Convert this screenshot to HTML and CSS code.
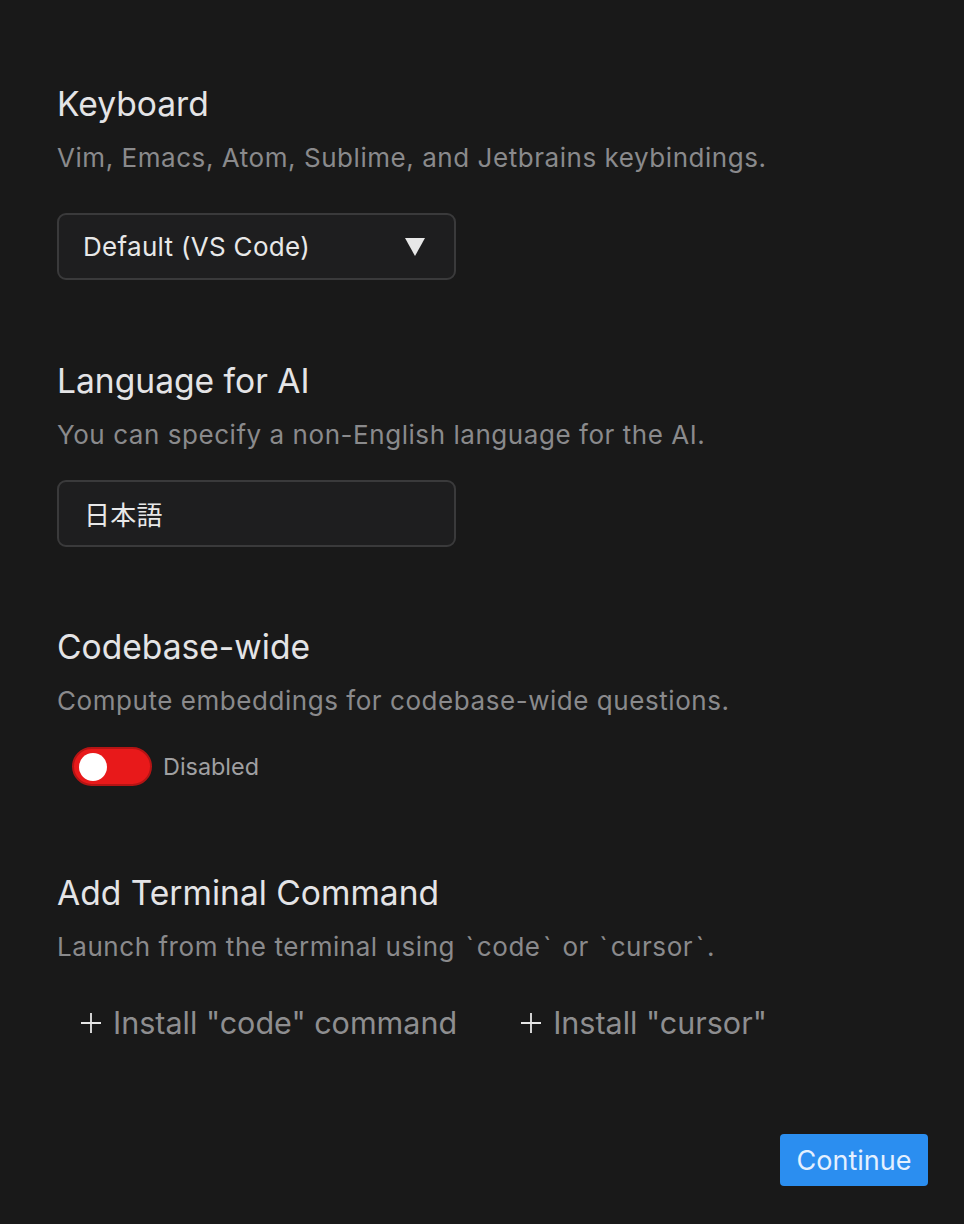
FILE: index.html
```html
<!DOCTYPE html>
<html lang="en">
<head>
<meta charset="utf-8">
<link rel="stylesheet" href="styles.css">
</head>
<body>
<main class="page">
  <section class="section s-keyboard">
    <h2 class="title">Keyboard</h2>
    <p class="desc">Vim, Emacs, Atom, Sublime, and Jetbrains keybindings.</p>
    <div class="select">
      <span class="select-text">Default (VS Code)</span>
      <svg class="caret" width="22" height="20" viewBox="0 0 22 20"><path d="M1 1 H21 L11 19 Z" fill="#e8e8e8"/></svg>
    </div>
  </section>

  <section class="section s-language">
    <h2 class="title">Language for AI</h2>
    <p class="desc">You can specify a non-English language for the AI.</p>
    <div class="input"><span class="input-text">日本語</span></div>
  </section>

  <section class="section s-codebase">
    <h2 class="title">Codebase-wide</h2>
    <p class="desc">Compute embeddings for codebase-wide questions.</p>
    <div class="toggle-row">
      <span class="toggle"><span class="knob"></span></span>
      <span class="toggle-label">Disabled</span>
    </div>
  </section>

  <section class="section s-terminal">
    <h2 class="title">Add Terminal Command</h2>
    <p class="desc">Launch from the terminal using <span class="tick">`</span>code<span class="tick">`</span> or <span class="tick">`</span>cursor<span class="tick">`</span>.</p>
    <div class="installs">
      <span class="install"><svg class="plus" width="22" height="22" viewBox="0 0 22 22"><path d="M11 1 V21 M1 11 H21" stroke="#e6e6e6" stroke-width="1.8"/></svg>Install "code" command</span>
      <span class="install"><svg class="plus" width="22" height="22" viewBox="0 0 22 22"><path d="M11 1 V21 M1 11 H21" stroke="#e6e6e6" stroke-width="1.8"/></svg>Install "cursor"</span>
    </div>
  </section>

  <div class="footer">
    <button class="continue">Continue</button>
  </div>
</main>
</body>
</html>
```

FILE: styles.css
```css
html, body {
  margin: 0;
  padding: 0;
  background: #191919;
  height: 100%;
}
body {
  font-family: Inter, "Noto Sans CJK JP", sans-serif;
  color: #e4e4e6;
}
.page {
  padding: 84px 36px 0 57px;
  display: flex;
  flex-direction: column;
}
.section { display: flex; flex-direction: column; align-items: flex-start; }
.title {
  margin: 0;
  font-size: 33.6px;
  line-height: 40px;
  font-weight: 400;
  color: #e4e4e6;
}
.desc {
  margin: 18px 0 0;
  font-size: 26px;
  line-height: 32px;
  letter-spacing: 0.55px;
  color: #8a8a8c;
}
.tick { padding: 0 2.5px; }
.select, .input {
  box-sizing: border-box;
  width: 399px;
  height: 67px;
  border: 2px solid #3a3a3b;
  border-radius: 9px;
  background: #1e1e1f;
  display: flex;
  align-items: center;
  padding: 0 26px 0 24px;
}
.select { margin-top: 39px; justify-content: space-between; }
.input { margin-top: 29px; padding-left: 25px; }
.select-text, .input-text {
  font-size: 26px;
  letter-spacing: 0.3px;
  color: #e8e8e8;
}
.caret { margin-right: 2px; }
.s-language { margin-top: 81px; }
.s-codebase { margin-top: 80px; }
.s-terminal { margin-top: 87px; }
.toggle-row {
  margin: 30px 0 0 15px;
  display: flex;
  align-items: center;
  gap: 11px;
}
.toggle {
  box-sizing: border-box;
  width: 80px;
  height: 39px;
  border-radius: 20px;
  background: #e8191a;
  border: 2px solid #b51414;
  display: flex;
  align-items: center;
  padding-left: 5px;
}
.knob {
  width: 28px;
  height: 28px;
  border-radius: 50%;
  background: #ffffff;
}
.toggle-label {
  font-size: 23.4px;
  color: #a0a0a2;
}
.installs {
  margin: 40px 0 0 23px;
  display: flex;
  gap: 63px;
}
.install {
  display: flex;
  align-items: center;
  font-size: 30.5px;
  line-height: 40px;
  color: #8e8e90;
}
.plus { margin-right: 11px; }
.footer {
  display: flex;
  justify-content: flex-end;
  margin-top: 91px;
}
.continue {
  width: 148px;
  height: 52px;
  border: none;
  border-radius: 4px;
  background: #2b8ef0;
  color: #e4f0ff;
  font-family: Inter, sans-serif;
  font-size: 27px;
  padding: 0;
}
```
